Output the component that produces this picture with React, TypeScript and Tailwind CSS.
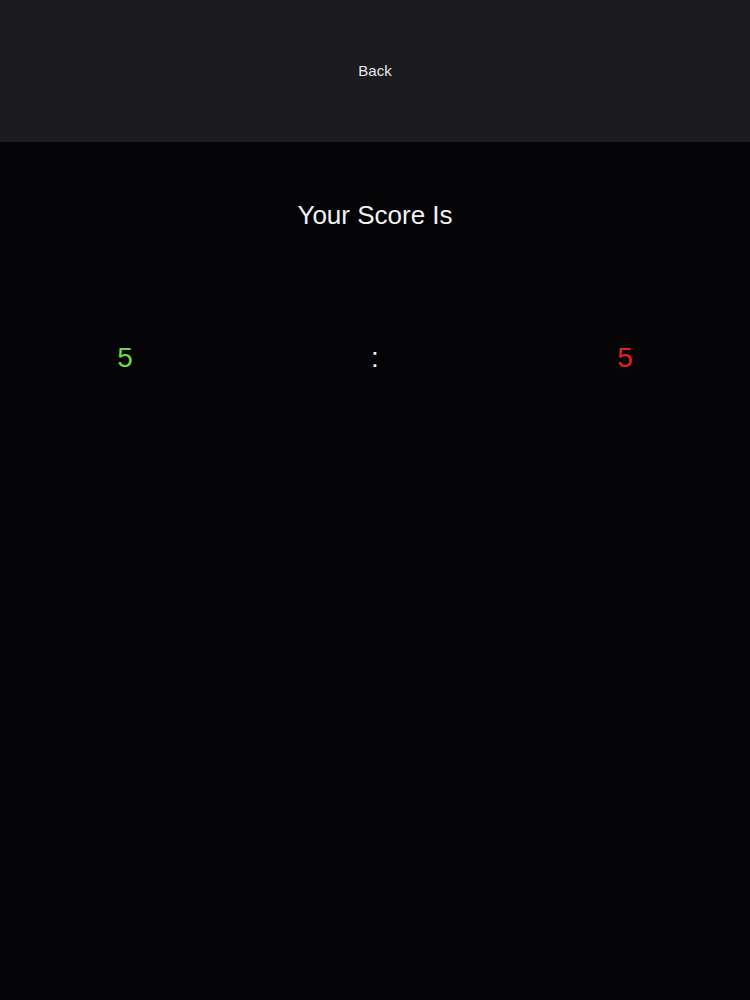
export default function App() {
  return (
    <div className="flex min-h-[1000px] w-[750px] flex-col bg-[#040305] font-['Liberation_Sans',Arial,sans-serif] text-white">
      {/* Header */}
      <div className="flex h-[142px] items-center justify-center bg-[#1c1b1f]">
        <button type="button" className="text-[15px] text-[#e8e8ea]">
          Back
        </button>
      </div>

      {/* Title */}
      <p className="mt-[57px] text-center text-[26px] leading-[32px] text-[#f2f2f2]">Your Score Is</p>

      {/* Score row */}
      <div className="mt-[111px] grid grid-cols-3 text-center text-[28px] leading-[32px]">
        <span className="text-[#6edb3c]">5</span>
        <span className="text-[#f2f2f2]">:</span>
        <span className="text-[#e3221d]">5</span>
      </div>
    </div>
  );
}
